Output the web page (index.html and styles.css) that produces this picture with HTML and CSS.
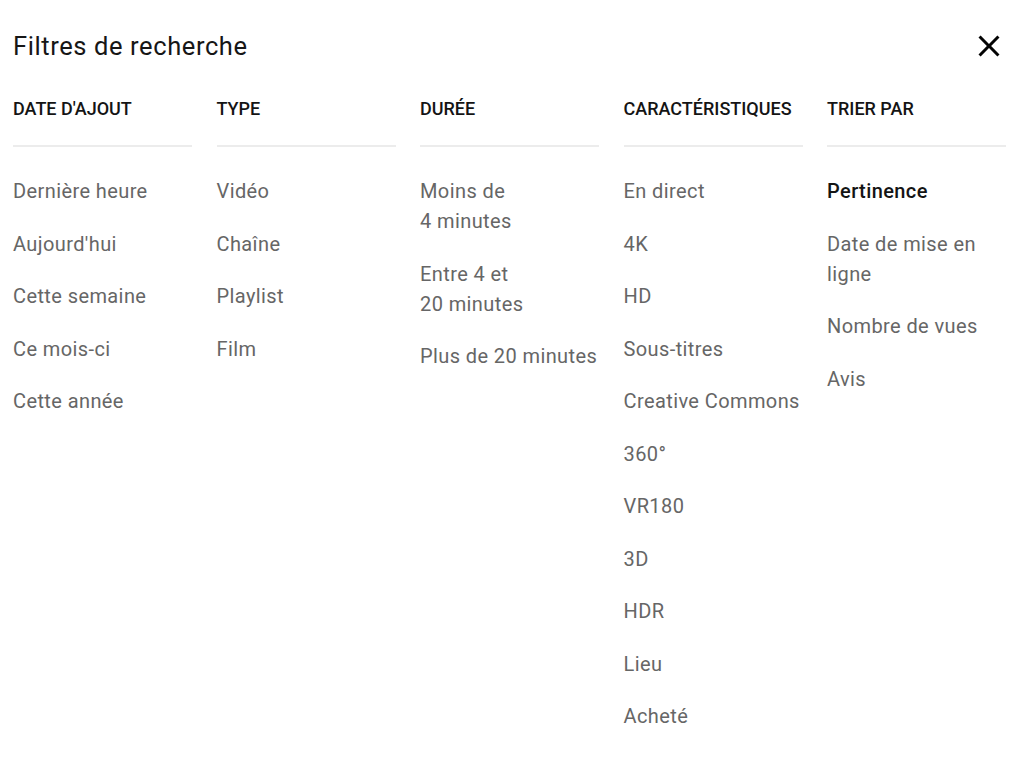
FILE: index.html
```html
<!DOCTYPE html>
<html lang="fr">
<head>
<meta charset="utf-8">
<title>Filtres de recherche</title>
<link rel="stylesheet" href="styles.css">
</head>
<body>
<div class="dialog">
  <div class="topbar">
    <h1 class="title">Filtres de recherche</h1>
    <button class="close" aria-label="Fermer">
      <svg viewBox="0 0 24 24" width="36" height="36"><path d="M19 6.41L17.59 5 12 10.59 6.41 5 5 6.41 10.59 12 5 17.59 6.41 19 12 13.41 17.59 19 19 17.59 13.41 12z" fill="#030303"/></svg>
    </button>
  </div>
  <div class="groups">
    <div class="group">
      <div class="group-head">DATE D'AJOUT</div>
      <ul class="options">
        <li>Dernière heure</li>
        <li>Aujourd'hui</li>
        <li>Cette semaine</li>
        <li>Ce mois-ci</li>
        <li>Cette année</li>
      </ul>
    </div>
    <div class="group">
      <div class="group-head">TYPE</div>
      <ul class="options">
        <li>Vidéo</li>
        <li>Chaîne</li>
        <li>Playlist</li>
        <li>Film</li>
      </ul>
    </div>
    <div class="group">
      <div class="group-head">DURÉE</div>
      <ul class="options">
        <li>Moins de<br>4 minutes</li>
        <li>Entre 4 et<br>20 minutes</li>
        <li>Plus de 20 minutes</li>
      </ul>
    </div>
    <div class="group">
      <div class="group-head">CARACTÉRISTIQUES</div>
      <ul class="options">
        <li>En direct</li>
        <li>4K</li>
        <li>HD</li>
        <li>Sous-titres</li>
        <li>Creative Commons</li>
        <li>360°</li>
        <li>VR180</li>
        <li>3D</li>
        <li>HDR</li>
        <li>Lieu</li>
        <li>Acheté</li>
      </ul>
    </div>
    <div class="group">
      <div class="group-head">TRIER PAR</div>
      <ul class="options">
        <li class="selected">Pertinence</li>
        <li>Date de mise en<br>ligne</li>
        <li>Nombre de vues</li>
        <li>Avis</li>
      </ul>
    </div>
  </div>
</div>
</body>
</html>
```
FILE: styles.css
```css
html, body {
  margin: 0;
  padding: 0;
  background: #ffffff;
}
body {
  font-family: Roboto, "Noto Sans", Arial, sans-serif;
  color: #030303;
}
.dialog {
  padding: 30px 18px 0 13px;
}
.topbar {
  display: flex;
  align-items: center;
  justify-content: space-between;
  height: 32px;
}
.title {
  margin: 0;
  font-size: 25.5px;
  font-weight: 400;
  letter-spacing: 0.6px;
  line-height: 32px;
  color: #161616;
}
.close {
  border: 0;
  background: none;
  padding: 0;
  margin-right: -1px;
  width: 36px;
  height: 36px;
  display: flex;
  align-items: center;
  justify-content: center;
}
.groups {
  display: grid;
  grid-template-columns: repeat(5, 1fr);
  column-gap: 24.5px;
  margin-top: 35px;
}
.group-head {
  font-size: 18px;
  font-weight: 500;
  line-height: 24px;
  color: #141414;
  padding-bottom: 24px;
  border-bottom: 2px solid #ececec;
}
.options {
  list-style: none;
  margin: 0;
  padding: 29px 0 0 0;
}
.options li {
  font-size: 20px;
  letter-spacing: 0.4px;
  line-height: 30px;
  color: #666666;
  margin-bottom: 22.5px;
}
.options li.selected {
  color: #141414;
  font-weight: 500;
}
```
